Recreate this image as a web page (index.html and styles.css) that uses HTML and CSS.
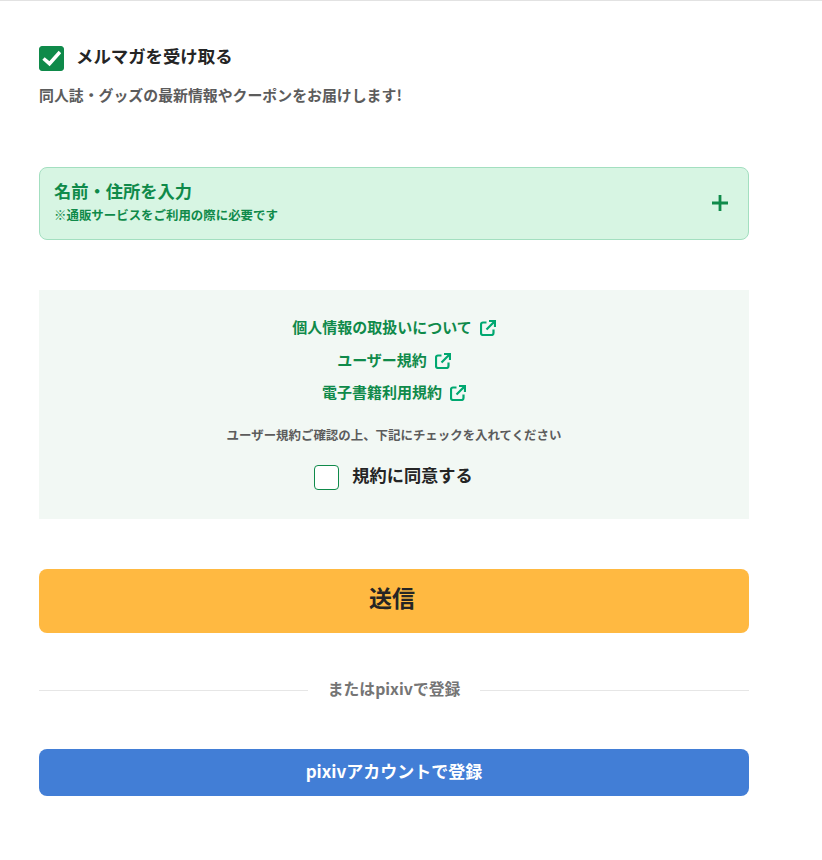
FILE: index.html
```html
<!DOCTYPE html>
<html lang="ja">
<head>
    <meta charset="UTF-8">
    <meta name="viewport" content="width=device-width, initial-scale=1.0">
    <title>会員登録</title>
    <link rel="stylesheet" href="styles.css">
</head>
<body>
    <form class="signup-form">
        <section class="newsletter">
            <label class="check-row">
                <span class="checkbox checkbox-on">
                    <svg width="19" height="17" viewBox="0 0 19 17"><path d="M1.5 8.5l6 5.2L18 2" fill="none" stroke="#fff" stroke-width="3.6"/></svg>
                </span>
                <span class="newsletter-label">メルマガを受け取る</span>
            </label>
            <p class="newsletter-note">同人誌・グッズの最新情報やクーポンをお届けします!</p>
        </section>

        <div class="accordion">
            <div>
                <div class="accordion-title">名前・住所を入力</div>
                <div class="accordion-note">※通販サービスをご利用の際に必要です</div>
            </div>
            <svg class="accordion-plus" width="16" height="16" viewBox="0 0 16 16"><path d="M0 8h16M8 0v16" fill="none" stroke="#0f8a4a" stroke-width="2.8"/></svg>
        </div>

        <section class="terms">
            <a class="terms-link" href="#">個人情報の取扱いについて
                <svg class="ext-icon" width="16" height="16" viewBox="0 0 16 16"><path d="M6.5 2.5H3a2 2 0 0 0-2 2V13a2 2 0 0 0 2 2h8.5a2 2 0 0 0 2-2V9.5M9 1h6v6M15 1L6.5 9.5" fill="none" stroke="#00a870" stroke-width="2.2"/></svg>
            </a>
            <a class="terms-link" href="#">ユーザー規約
                <svg class="ext-icon" width="16" height="16" viewBox="0 0 16 16"><path d="M6.5 2.5H3a2 2 0 0 0-2 2V13a2 2 0 0 0 2 2h8.5a2 2 0 0 0 2-2V9.5M9 1h6v6M15 1L6.5 9.5" fill="none" stroke="#00a870" stroke-width="2.2"/></svg>
            </a>
            <a class="terms-link" href="#">電子書籍利用規約
                <svg class="ext-icon" width="16" height="16" viewBox="0 0 16 16"><path d="M6.5 2.5H3a2 2 0 0 0-2 2V13a2 2 0 0 0 2 2h8.5a2 2 0 0 0 2-2V9.5M9 1h6v6M15 1L6.5 9.5" fill="none" stroke="#00a870" stroke-width="2.2"/></svg>
            </a>
            <p class="terms-note">ユーザー規約ご確認の上、下記にチェックを入れてください</p>
            <label class="check-row terms-agree">
                <span class="checkbox"></span>
                <span class="agree-label">規約に同意する</span>
            </label>
        </section>

        <button class="btn btn-submit" type="button">送信</button>

        <div class="divider"><span>またはpixivで登録</span></div>

        <button class="btn btn-pixiv" type="button">pixivアカウントで登録</button>
    </form>
</body>
</html>
```

FILE: styles.css
```css
* {
    margin: 0;
    padding: 0;
    box-sizing: border-box;
}

body {
    font-family: "Noto Sans CJK JP", "Noto Sans", sans-serif;
    background-color: #fff;
    border-top: 1px solid #e2e2e2;
    color: #252525;
}

.signup-form {
    width: 710px;
    margin-left: 39px;
    padding-top: 45px;
}

/* Newsletter */
.check-row {
    display: flex;
    align-items: center;
    gap: 12px;
}

.checkbox {
    width: 25px;
    height: 25px;
    flex-shrink: 0;
    display: flex;
    justify-content: center;
    align-items: center;
    background-color: #fff;
    border: 1px solid #0f8a4a;
    border-radius: 4px;
}

.checkbox-on {
    background-color: #0f8a4a;
    border-radius: 3px;
}

.newsletter-label {
    margin-bottom: 5px;
    font-size: 17.4px;
    line-height: 18px;
    font-weight: 700;
}

.newsletter-note {
    margin-top: 14px;
    font-size: 14.9px;
    line-height: 20px;
    font-weight: 700;
    color: #5c5c5c;
}

/* Accordion */
.accordion {
    height: 73px;
    margin-top: 62px;
    padding: 0 20px 0 14px;
    display: flex;
    justify-content: space-between;
    align-items: center;
    background-color: #d7f5e3;
    border: 1px solid #a3dfc0;
    border-radius: 8px;
    color: #0f8a4a;
}

.accordion-title {
    margin-top: -4px;
    margin-bottom: 4px;
    font-size: 17.25px;
    line-height: 22px;
    font-weight: 700;
}

.accordion-note {
    font-size: 12.45px;
    line-height: 18px;
    font-weight: 700;
}

.accordion-plus {
    margin-bottom: 2px;
}

/* Terms */
.terms {
    height: 229px;
    margin-top: 50px;
    padding-top: 20.5px;
    display: flex;
    flex-direction: column;
    align-items: center;
    background-color: #f2f8f4;
}

.terms-link {
    height: 32.5px;
    display: flex;
    align-items: center;
    gap: 8px;
    font-size: 15px;
    font-weight: 700;
    color: #0f8a4a;
    text-decoration: none;
}

.ext-icon {
    margin-top: 3px;
}

.terms-note {
    margin-top: 17.5px;
    font-size: 12.45px;
    line-height: 18px;
    font-weight: 700;
    color: #5c5c5c;
}

.terms-agree {
    margin-top: 20px;
    gap: 13px;
    padding-right: 1px;
}

.agree-label {
    margin-bottom: 6px;
    font-size: 17.2px;
    line-height: 22px;
    font-weight: 700;
}

/* Buttons */
.btn {
    display: block;
    width: 100%;
    border: none;
    border-radius: 8px;
    font-family: inherit;
    font-weight: 700;
    cursor: pointer;
}

.btn-submit {
    height: 64px;
    margin-top: 50px;
    padding: 0 4px 8px 0;
    background-color: #ffb941;
    color: #252525;
    font-size: 23px;
}

.btn-pixiv {
    height: 47px;
    margin-top: 47px;
    padding-bottom: 4px;
    background-color: #427ed6;
    color: #fff;
    font-size: 17px;
}

/* Divider */
.divider {
    margin-top: 45px;
    display: flex;
    align-items: center;
    gap: 20px;
    font-size: 15.8px;
    line-height: 24px;
    font-weight: 700;
    color: #757575;
}

.divider span {
    margin-bottom: 2px;
    line-height: 22px;
}

.divider::before,
.divider::after {
    content: "";
    flex: 1;
    height: 1px;
    background-color: #e6e6e6;
}
```
